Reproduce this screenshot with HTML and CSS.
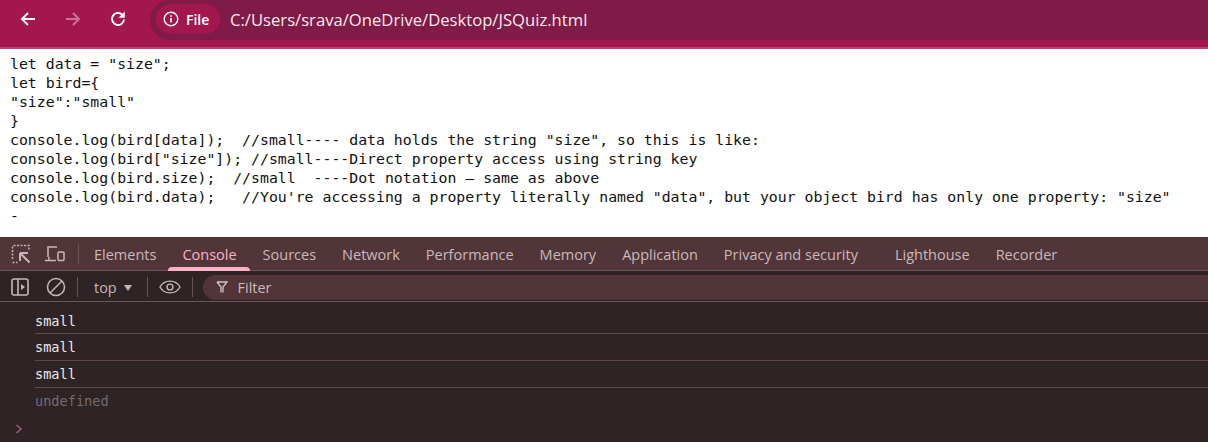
FILE: index.html
```html
<!DOCTYPE html>
<html lang="en">
<head>
<meta charset="utf-8">
<title>JSQuiz</title>
<link rel="stylesheet" href="styles.css">
</head>
<body>
<header class="chrome">
  <nav class="nav-buttons">
    <svg class="nav-icon" viewBox="0 0 18 18"><path d="M16 9H3M9 3 3 9l6 6" fill="none" stroke="#fff" stroke-width="2"/></svg>
    <svg class="nav-icon dim" viewBox="0 0 18 18"><path d="M2 9h13M9 3l6 6-6 6" fill="none" stroke="#fff" stroke-width="2"/></svg>
    <svg class="nav-icon" viewBox="0 0 18 18"><path d="M15 9.500A6 6 0 1 1 13 4.500" fill="none" stroke="#fff" stroke-width="2"/><path d="M15.800 1.500v6.300H9.500z" fill="#fff"/></svg>
  </nav>
  <div class="omnibox">
    <div class="chip">
      <svg class="chip-icon" viewBox="0 0 16 16"><circle cx="8" cy="8" r="6.800" fill="none" stroke="#fff" stroke-width="1.400"/><path d="M8 7v4.500M8 4.300v1.500" stroke="#fff" stroke-width="1.600"/></svg>
      <span>File</span>
    </div>
    <span class="url">C:/Users/srava/OneDrive/Desktop/JSQuiz.html</span>
  </div>
</header>
<main class="page">
<pre class="code">let data = "size";
let bird={
"size":"small"
}
console.log(bird[data]);  //small---- data holds the string "size", so this is like:
console.log(bird["size"]); //small----Direct property access using string key
console.log(bird.size);  //small  ----Dot notation — same as above
console.log(bird.data);   //You're accessing a property literally named "data", but your object bird has only one property: "size"
-</pre>
</main>
<section class="devtools">
  <div class="tabbar">
    <div class="tool-icons">
      <svg class="tool" viewBox="0 0 20 20"><path d="M1.500 15V2.500a1 1 0 0 1 1-1H18V7M1.500 18.500h5" fill="none" stroke="#c9b6b8" stroke-width="1.500" stroke-dasharray="2 1.500"/><path d="M9 9h8M9 9v8M9.500 9.500l9 9" fill="none" stroke="#c9b6b8" stroke-width="2"/></svg>
      <svg class="tool" viewBox="0 0 20 20"><path d="M3 13V3h9M0 16.500h11M4 13v3" fill="none" stroke="#c9b6b8" stroke-width="1.500"/><rect x="13" y="8" width="6" height="8.500" rx="1" fill="none" stroke="#c9b6b8" stroke-width="1.500"/></svg>
    </div>
    <span class="sep tab-sep"></span>
    <div class="tabs">
      <span class="tab">Elements</span>
      <span class="tab active">Console</span>
      <span class="tab">Sources</span>
      <span class="tab">Network</span>
      <span class="tab">Performance</span>
      <span class="tab">Memory</span>
      <span class="tab">Application</span>
      <span class="tab wide">Privacy and security</span>
      <span class="tab">Lighthouse</span>
      <span class="tab">Recorder</span>
    </div>
  </div>
  <div class="filterbar">
    <svg class="tool" viewBox="0 0 20 20"><rect x="2" y="2" width="16" height="16" rx="2" fill="none" stroke="#c9b6b8" stroke-width="1.600"/><path d="M8 2v16" stroke="#c9b6b8" stroke-width="1.600"/><path d="M11 7l4 3-4 3z" fill="#c9b6b8"/></svg>
    <svg class="tool clear" viewBox="0 0 20 20"><circle cx="10" cy="10" r="8.500" fill="none" stroke="#c9b6b8" stroke-width="1.500"/><path d="M4 16 16 4" stroke="#c9b6b8" stroke-width="1.500"/></svg>
    <span class="sep"></span>
    <span class="context">top <i class="caret"></i></span>
    <span class="sep"></span>
    <svg class="eye" viewBox="0 0 24 16"><path d="M1 8c5-8.500 17-8.500 22 0-5 8.500-17 8.500-22 0z" fill="none" stroke="#c9b6b8" stroke-width="1.500"/><circle cx="12" cy="8" r="3.200" fill="none" stroke="#c9b6b8" stroke-width="1.500"/></svg>
    <span class="sep"></span>
    <div class="filter">
      <svg class="funnel" viewBox="0 0 12 12"><path d="M1 1h10L7 6v5.500M5 11.500V6L1 1" fill="none" stroke="#d5c4c6" stroke-width="1.300"/></svg>
      <span>Filter</span>
    </div>
  </div>
  <div class="console">
    <div class="row">small</div>
    <div class="row">small</div>
    <div class="row">small</div>
    <div class="row result">undefined</div>
    <svg class="prompt" viewBox="0 0 8 10"><path d="M1.500 1l4.500 4-4.500 4" fill="none" stroke="#a0587a" stroke-width="1.600"/></svg>
  </div>
</section>
</body>
</html>
```
FILE: styles.css
```css
* { box-sizing: border-box; }
html, body { margin: 0; height: 100%; overflow: hidden; }
body { width: 1208px; height: 442px; display: flex; flex-direction: column; font-family: "Open Sans", "Noto Sans", sans-serif; }

.chrome { height: 49px; flex: none; display: flex; align-items: flex-start; background: #a3174f; border-bottom: 2px solid #b8447a; }
.nav-buttons { width: 150px; height: 40px; flex: none; display: flex; align-items: center; gap: 27px; padding: 0 0 2px 19px; }
.nav-icon { width: 18px; height: 18px; }
.nav-icon.dim { opacity: .4; }
.omnibox { flex: 1; height: 40px; display: flex; align-items: center; background: #801a46; border-radius: 20px 0 0 20px; padding-left: 6px; }
.chip { width: 64px; height: 30px; margin-top: -2px; border-radius: 15px; background: #a3174f; display: flex; align-items: center; gap: 7px; padding-left: 7px; color: #fff; font-size: 14px; font-weight: 600; }
.chip-icon { width: 16px; height: 16px; }
.url { margin-left: 10px; margin-top: -1px; color: #fbeaf0; font-size: 16.650px; white-space: nowrap; }

.page { height: 188px; flex: none; background: #fff; padding: 5px 10px 0; }
.code { margin: 0; font: 14.840px/19px "DejaVu Sans Mono", monospace; color: #111; }

.devtools { flex: 1; min-height: 0; display: flex; flex-direction: column; background: #2e2426; }
.tabbar { height: 34px; flex: none; display: flex; align-items: center; background: #523539; border-bottom: 1px solid #6f5357; }
.tool-icons { display: flex; gap: 14px; padding-left: 11px; }
.tool { width: 20px; height: 20px; flex: none; }
.sep { width: 1px; height: 20px; background: #6b5054; flex: none; }
.tab-sep { margin-left: 13px; }
.tabs { display: flex; gap: 26px; margin-left: 15px; height: 33px; }
.tab { position: relative; line-height: 36px; font-size: 14.500px; font-weight: 500; color: #cbb9bb; white-space: nowrap; }
.tab.wide { margin-right: 11px; }
.tab.active { color: #ffb0c8; }
.tab.active::after { content: ""; position: absolute; left: -14px; right: -13px; bottom: -1px; height: 4px; background: #ffb0c8; border-radius: 4px 4px 0 0; }

.filterbar { height: 31px; flex: none; display: flex; align-items: center; gap: 11px; padding: 4px 0 2px 10px; border-bottom: 1px solid #6f5357; }
.filterbar .clear { margin-left: 5px; }
.context { display: flex; align-items: center; gap: 7px; margin: 0 4px 0 5px; font-size: 14.400px; color: #c9b6b8; }
.caret { width: 0; height: 0; border-left: 4.500px solid transparent; border-right: 4.500px solid transparent; border-top: 6px solid #c9b6b8; margin-top: 2px; }
.eye { width: 22px; height: 16px; flex: none; }
.filter { flex: 1; height: 25px; margin-left: -1px; display: flex; align-items: center; gap: 10px; padding-left: 13px; background: #523539; border-radius: 13px 0 0 13px; color: #cbb9bb; font-size: 14.400px; }
.funnel { width: 12px; height: 12px; }

.console { flex: 1; position: relative; }
.row { height: 27px; margin-left: 35px; padding-top: 6px; font: 13.600px/15px "DejaVu Sans Mono", monospace; color: #eee6e8; border-bottom: 1px solid #5e4649; }
.row:first-child { height: 32px; padding-top: 12px; }
.row.result { border-bottom: 0; color: #746b6e; }
.prompt { position: absolute; left: 15px; bottom: 8px; width: 8px; height: 10px; }
```
